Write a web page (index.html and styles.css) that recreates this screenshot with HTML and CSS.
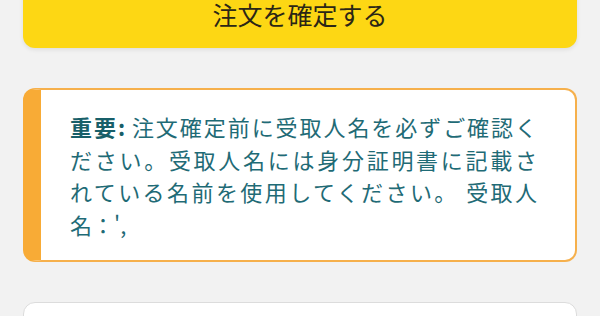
FILE: index.html
```html
<!DOCTYPE html>
<html lang="ja">
<head>
<meta charset="utf-8">
<link rel="stylesheet" href="styles.css">
</head>
<body>
<main class="page">
  <button class="confirm-btn" type="button">注文を確定する</button>
  <section class="notice">
    <p class="notice-text">
      <span class="ln"><b class="strong">重要:</b> 注文確定前に受取人名を必ずご確認く</span>
      <span class="ln">ださい。受取人名には身分証明書に記載さ</span>
      <span class="ln">れている名前を使用してください。 受取人</span>
      <span class="ln last">名：',</span>
    </p>
  </section>
  <section class="card"></section>
</main>
</body>
</html>
```
FILE: styles.css
```css
* { box-sizing: border-box; }
html, body {
  margin: 0;
  padding: 0;
  background: #f2f2f2;
  font-family: "Noto Sans CJK JP", "Noto Sans", sans-serif;
  overflow: hidden;
}
.page {
  display: flex;
  flex-direction: column;
  padding: 0 23px;
}
.confirm-btn {
  margin-top: -20px;
  height: 68px;
  width: 100%;
  border: none;
  border-radius: 12px;
  background: #fdd714;
  color: #2b2616;
  font-family: "Noto Sans CJK JP", sans-serif;
  font-size: 25px;
  line-height: 1;
  padding: 0;
  box-shadow: 0 2px 4px rgba(0, 0, 0, 0.08);
}
.notice {
  margin-top: 40px;
  background: #ffffff;
  border: 2px solid #f6b04c;
  border-left: 18px solid #f8ab36;
  border-radius: 12px;
  padding: 20px 38px 20px 29px;
}
.notice-text {
  margin: 0;
  font-size: 22px;
  line-height: 32.5px;
  color: #1f6b76;
}
.ln {
  display: block;
  text-align: justify;
  text-align-last: justify;
}
.ln.last {
  text-align: left;
  text-align-last: left;
}
.strong {
  font-weight: 700;
  color: #185f69;
}
.card {
  margin-top: 40px;
  height: 100px;
  background: #ffffff;
  border: 1.5px solid #dcdcdc;
  border-radius: 12px;
}
```
